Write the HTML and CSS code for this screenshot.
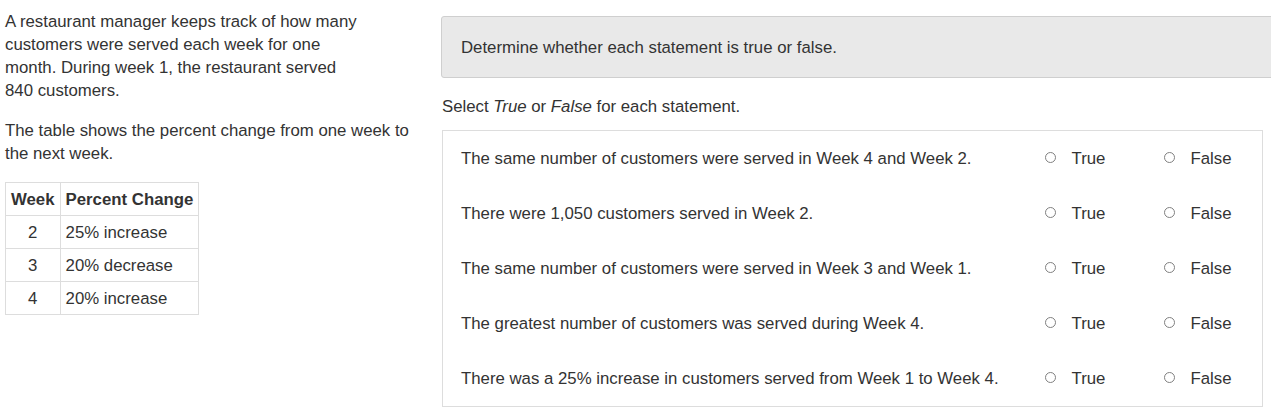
FILE: index.html
```html
<!DOCTYPE html>
<html>
<head>
<meta charset="utf-8">
<link rel="stylesheet" href="styles.css">
</head>
<body>
<div class="page">
  <div class="stimulus">
    <p class="para">A restaurant manager keeps track of how many<br>customers were served each week for one<br>month. During week 1, the restaurant served<br>840 customers.</p>
    <p class="para">The table shows the percent change from one week to the next week.</p>
    <table class="data">
      <thead>
        <tr><th class="c-week">Week</th><th class="c-pct">Percent Change</th></tr>
      </thead>
      <tbody>
        <tr><td class="c-week">2</td><td>25% increase</td></tr>
        <tr><td class="c-week">3</td><td>20% decrease</td></tr>
        <tr><td class="c-week">4</td><td>20% increase</td></tr>
      </tbody>
    </table>
  </div>
  <div class="item">
    <div class="prompt">Determine whether each statement is true or false.</div>
    <p class="instr">Select <em>True</em> or <em>False</em> for each statement.</p>
    <div class="matrix">
      <div class="row"><div class="stmt">The same number of customers were served in Week 4 and Week 2.</div><div class="opt"><span class="radio"></span><span>True</span></div><div class="opt"><span class="radio"></span><span>False</span></div></div>
      <div class="row"><div class="stmt">There were 1,050 customers served in Week 2.</div><div class="opt"><span class="radio"></span><span>True</span></div><div class="opt"><span class="radio"></span><span>False</span></div></div>
      <div class="row"><div class="stmt">The same number of customers were served in Week 3 and Week 1.</div><div class="opt"><span class="radio"></span><span>True</span></div><div class="opt"><span class="radio"></span><span>False</span></div></div>
      <div class="row"><div class="stmt">The greatest number of customers was served during Week 4.</div><div class="opt"><span class="radio"></span><span>True</span></div><div class="opt"><span class="radio"></span><span>False</span></div></div>
      <div class="row"><div class="stmt">There was a 25% increase in customers served from Week 1 to Week 4.</div><div class="opt"><span class="radio"></span><span>True</span></div><div class="opt"><span class="radio"></span><span>False</span></div></div>
    </div>
  </div>
</div>
</body>
</html>
```

FILE: styles.css
```css
html, body {
  margin: 0;
  padding: 0;
  background: #fff;
  overflow: hidden;
}
body {
  font-family: "Liberation Sans", Arial, sans-serif;
  font-size: 16.8px;
  line-height: 23px;
  color: #333;
}
.page {
  display: flex;
  align-items: flex-start;
  padding: 9.5px 0 0 5px;
}
.stimulus {
  width: 420px;
  flex: none;
  margin-right: 16px;
}
.para {
  margin: 0 0 17px 0;
}
.data {
  border-collapse: collapse;
}
.data th, .data td {
  border: 1px solid #ddd;
  padding: 5px 5px 4px 5px;
  text-align: left;
  font-weight: normal;
}
.data th {
  font-weight: bold;
}
.data .c-week {
  text-align: center;
}
.item {
  flex: none;
  width: 822px;
  padding-top: 6.5px;
}
.prompt {
  width: 880px;
  background: #e9e9e9;
  border: 1px solid #cfcfcf;
  border-radius: 3px;
  padding: 19px 19px 18px 19px;
  box-sizing: border-box;
}
.instr {
  margin: 17px 0 12px 1px;
}
.matrix {
  margin-left: 1px;
  border: 1px solid #ddd;
  padding-left: 18px;
}
.row {
  display: grid;
  grid-template-columns: 1fr 119px 98.5px;
  align-items: center;
  height: 55px;
}
.opt {
  display: flex;
  align-items: center;
  gap: 16px;
}
.radio {
  width: 11px;
  height: 11px;
  box-sizing: border-box;
  border: 1px solid #808080;
  border-radius: 50%;
  background: #fff;
  margin-top: -2px;
}
```
